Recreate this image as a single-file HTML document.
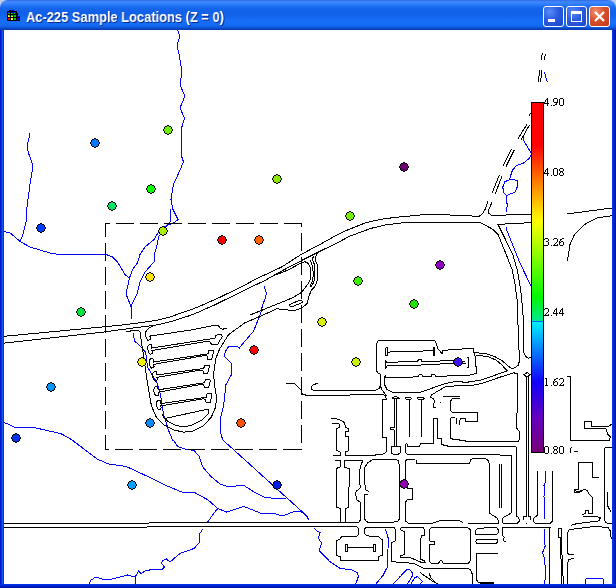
<!DOCTYPE html>
<html><head><meta charset="utf-8"><title>Ac-225 Sample Locations</title>
<style>
html,body{margin:0;padding:0;background:#fff;overflow:hidden}
body{width:616px;height:588px;position:relative;font-family:"Liberation Sans",sans-serif}
#win{position:absolute;left:0;top:0;width:616px;height:588px;background:#0030e0;overflow:hidden}
#tb{position:absolute;left:0;top:0;width:616px;height:30px;border-radius:8px 8px 0 0;
background:linear-gradient(to bottom,#2a62dc 0.0%,#3c82fa 3.3%,#3a86ff 10.0%,#2878f8 16.7%,#1666ec 26.7%,#1260e8 40.0%,#1262ea 53.3%,#146af4 60.0%,#166ef8 73.3%,#1468f0 86.7%,#0c50d0 93.3%,#0838a8 100.0%)}
#lb{position:absolute;left:0;top:30px;width:4px;height:558px;background:linear-gradient(to right,#0019cf 0,#0019cf 1px,#0030e0 1px,#0030e0 2px,#1a5aee 2px,#1a5aee 3px,#0034e0 3px)}
#rb{position:absolute;right:0;top:30px;width:4px;height:558px;background:linear-gradient(to right,#0034e4 0,#0034e4 1px,#0028d8 1px,#0028d8 2px,#001cc4 2px,#001cc4 3px,#00109c 3px)}
#bb{position:absolute;left:0;bottom:0;width:616px;height:4px;background:linear-gradient(to bottom,#0034e4 0,#0034e4 1px,#0028d8 1px,#0028d8 2px,#001cc4 2px,#001cc4 3px,#00109c 3px)}
#client{position:absolute;left:4px;top:30px;width:608px;height:554px;background:#fff}
#title{position:absolute;left:26px;top:9px;color:#fff;font-weight:bold;font-size:14px;line-height:16px;white-space:nowrap;text-shadow:1px 1px 0 #0a2a8c;transform-origin:0 0;transform:scaleX(0.92);will-change:transform}
.btn{position:absolute;top:6px;width:21px;height:21px;box-sizing:border-box;border:1px solid #fff;border-radius:3px;
background:radial-gradient(circle at 30% 25%,#5a8cf8 0%,#2a5ce0 45%,#1a46c8 100%)}
#bclose{background:radial-gradient(circle at 30% 25%,#f09070 0%,#d8502c 45%,#c03a18 100%)}
.lbl{position:absolute;left:545px;font-size:11px;line-height:11px;color:#000;white-space:nowrap}
</style></head><body>
<div id="win">
<div style="position:absolute;left:0;top:0;width:616px;height:8px;background:#bccaec"></div>
<div id="tb"></div>
<div id="lb"></div><div id="rb"></div><div id="bb"></div>
<div id="client"></div>
<svg width="616" height="588" viewBox="0 0 616 588" style="position:absolute;left:0;top:0" shape-rendering="crispEdges">
<defs><clipPath id="c"><rect x="4" y="30" width="608" height="554"/></clipPath>
<linearGradient id="cb1" gradientUnits="userSpaceOnUse" x1="0" y1="103" x2="0" y2="322"><stop offset="0.0000" stop-color="#ff0000"/><stop offset="0.1918" stop-color="#ff0000"/><stop offset="0.5388" stop-color="#ffff00"/><stop offset="0.8858" stop-color="#00f800"/><stop offset="1.0000" stop-color="#00e696"/></linearGradient>
<linearGradient id="cb2" gradientUnits="userSpaceOnUse" x1="0" y1="322" x2="0" y2="452"><stop offset="0.0000" stop-color="#00f0ff"/><stop offset="0.4615" stop-color="#1000f8"/><stop offset="0.7308" stop-color="#6400c0"/><stop offset="1.0000" stop-color="#780078"/></linearGradient>
</defs>
<g clip-path="url(#c)" fill="none" stroke-width="1">
<path stroke="#0000ff" d="M30 133 L27 147 L28.5 153 L33 166 L30 184.5 L27 207 L26 222 L22.5 236 L20 241M4 231.5 L10 233 L14 236 L20 241.5 L30 247 L50 253 L62.5 255 L80 254 L105 254 L112.5 257 L117.5 262 L125 274.5 L129.5 278M177.5 30 L180 36 L177 45 L179 54 L182 72 L180 85 L185 96 L180 108 L184.5 118 L181 130 L181 147 L181 154.5 L183.5 162 L178 174.5 L173.5 184.5 L171 199.5 L173 209.5 L178 219.5 L175 222 L164 227 L158 233 L154 239.5 L145 247 L140 254.5 L137.5 263 L132.5 269.5 L129.5 278 L127.5 287 L126 294 L131 306.5 L131 319M171 209.5 L170 222 L164 229.5 L159 236 L156.5 247 L154 256 L154 262 L145 272 L140 282 L137 294 L131 306.5M133.3 333.5 L133.6 336 L134.6 341 L139.5 345.5 L142 348 L145.3 352 L146.5 357 L147.3 366.8 L152.7 375.7 L157 382.9 L160.5 395 L163.5 414 L168.4 430 L172.5 440 L174 441M4 422.8 L8 424 L14.4 427.2 L32.6 427.2 L47 430.5 L61 433.7 L70 438.5 L82 447.5 L97.5 459.2 L108 463.8 L126 466.4 L144 474.7 L164 484.6 L181.5 492 L195 492.75 L207.75 499.75 L217.75 508.5 L226.5 512 L244 506.5 L261.5 513.5 L274 513.5 L282.75 516 L294 511.5 L299 511M224 441 L308 517M174 441 L177.75 446.5 L185 449 L194 450.5 L199 456 L202.75 467 L211.5 477 L220 484 L227.75 486.5 L244 485.5 L254 492 L264 497 L274 498.5 L286.5 498M217.75 508.5 L212.75 514.75 L207.75 522M202.75 529 L199 534.75 L199.75 542 L194 548.5 L180 553.5 L170 562 L166.5 559 L162.75 560.5 L161.5 563.5 L164.5 567 L161.5 570 L154 569 L145 571 L141 573.5 L138.75 571 L135 577 L127.5 575 L112.5 579 L105 580 L96 577 L91 580 L89 584M135 577 L135 584M544.5 72.5 L547.5 82.5M523.3 135.8 L523.6 140.5 L527.4 147 L531.5 153.6 L529.3 158.3 L523.6 163 L516.2 165.7 L512.4 170.4 L510.2 177 L509.6 179.8 L505 181.6 L502.7 187.2 L504 192.9 L506.4 195.7 L515.2 191.9 L517.1 187.2 L517.1 180.7 L513.4 179.4 L509.6 179.8M506.4 195.7 L507.2 206 L505.9 212.5M506 227 L507 230.7 L519.5 262 L531 286M264 286 L264.5 288 L266.5 293.2 L265 299 L262.6 305 L260.7 313.2 L253.6 331 L242.9 343.6 L239.3 348 L236.6 346.2 L228.6 346.8 L225.9 350.7 L224 356 L231.8 364 L231.8 374 L226 384.6 L223.6 405.7 L220.7 417 L220.7 433.3 L222.8 440 L224 441M299 511 L305 514.2 L309.2 520M314.2 528.3 L316.7 530.8 L320 532.5 L318.3 538.3 L321.7 543.3 L319.2 550.8 L330 561.7 L340 568.3 L351.7 570 L357.5 572.5 L358.3 576.7 L355.8 584M385.3 529.2 L388.3 538.3 L387.5 566.7 L383.3 575 L375.8 584M400 576.7 L393.3 584M393.3 584 L406.7 569.7 L410 569.7 L411.7 571.7 L413 575 L407.5 584M410.8 584 L415 577.5 L417.5 576.7 L422.5 581.7 L420 584M545.3 471 L545.3 482 L544 485.5 L544.8 488 L544 496.5 L544.5 518.7M545.1 528.6 L544 534.2 L545.1 546.3 L542.5 552.9 L544.7 558.4 L545.6 576.1 L544.5 584M585.5 584 L585.5 579.5 L587 578.5 L602 578.5 L603.5 579.5 L603.5 584"/>
<path stroke="#000" d="M4 523.5 L149 523.5M149 522.5 L346 522.5M4 527.5 L147 527.5M147 526.5 L300 526.5M4 336.3 L121 325.2 L149 321.5 L156 320.5 L159 319.8 L172 316.5 L179.5 313.4 L189.2 310.4 L199 306.6 L208.7 302.2 L219 297.7 L239.2 287.9 L258.7 277.7 L265 274.8 L282 266.8 L301.4 254.3 L319.5 244.7 L335 236.1 L347 230.2 L365.5 222.8 L380 219.5 L395.5 217.3 L420.5 215 L438 214.5 L462 215.5 L479.3 216.4 L482.9 212.9 L485 209.5 L488 201.5M492 202.5 L488 211 L489 213.5 L491.8 215.5 L518.6 214.6 L531 214.3M4 343.1 L105 331.9 L122 329.5 L137 327.5 L153 325.5 L158 324.6 L172 321.4 L179.5 318.7 L189.2 315.8 L199 311.9 L208.7 307.5 L215.8 304.4 L229.5 297.6 L249 287.9 L265 280.5 L282 270.8 L301.4 260.6 L318.4 252 L335 244 L350 236.1 L370.5 228.5 L385 225 L403 222.8 L420 222.6 L480.3 222.6 L492.7 229.2 L498 234.3 L506 254 L512.3 270 L515 284.3 L517.1 300M531 222.7 L511.4 223.6 L498 224.5 L503.4 235.2 L513.2 255.7 L517.7 271.8 L520.4 287.9 L521.8 300M126 331.5 L130 331.5 L130.5 330.5 L138.5 330.5 L140 332 L140.5 334 L140.8 338 L143.4 354.5 L148 386.4 L151.4 405.7 L156.2 417 L164.4 425.2 L174 430 L183.8 432.2 L193.6 430.9 L203.3 426 L211.4 417 L215.5 407.3 L216.6 397.6 L214.7 386.2 L213.6 375 L214.3 368.6 L216 358 L219.6 349 L228.6 334.6 L244.6 323 L259 316.8 L276.8 308.8 L285.7 309.6 L292.9 311 L294.3 310.7 L302.6 307.5 L307.4 303.3 L308.6 297.4 L311 290.8 L315.7 285.5 L317.5 279 L317.3 264.5 L315 260 L315 257.2 L318.4 252M250 315 L283.6 301.5 L292 298 L300.2 293.2 L303.8 289.6 L308.5 283 L310.8 279 L311 274.8 L310.5 268 L308.2 263.4 L304.8 261.7 L301.4 262.8 L287.7 270.2 L275.8 274.8M313.5 256.5 L312.2 258.9 L314.4 264.5 L315 274.8 L313.9 282 L311 287 L310 286 L312.2 282 L313.3 274.8 L312.7 266.8 L309.9 259.4M289.5 304.5 L300.2 300 L302 301 L302 302.7 L291.3 307 L289.5 305.7 L289.5 304.5M209 409 L208 413.8 L201.7 420.3 L192 425.2 L183.8 426.8 L175 425.2 L167.6 421 L163.5 417 L162.4 414.6 L165.2 418.4 L205 409.8 L209 409M153.8 325.3 L152.75 325.8 L148.5 328.4 L146 331.4 L145.5 334.75 L146.4 338.6 L148 340.3 L150.2 339.4 L150.6 337.7 L149.8 336 L190 330.2 L210.5 326.1 L218.2 325.2 L219.9 328 L222.4 329.2 L226.7 328.4M285.7 383.7 L294.6 383.7 L298.2 387.3 L301.5 390M542.5 53 L541 60M545.5 54.5 L544 60M540 70 L538 82.5M542 70 L540.5 82M530.2 113.4 L529.6 116.2M527.4 123.7 L518 138.6M529.6 124.6 L520.8 140.5M511.5 148.9 L503 165.7M514.3 149.9 L505.9 166.7M499.3 175 L492.2 192.9M502.1 176 L495.2 193.8M567 214 L612 208M612 215.7 L597 218 L584.5 224.5 L574.5 234.5 L570 244.5 L567.5 260.7M214.8 338.2 L151.9 348 L151.5 345 L149.8 344.5 L148 346.2 L147.7 349.2 L148.5 352.2 L150.2 354.3 L151.9 353.9 L152.75 352.2 L151.9 350.5 L208 341.1 L209.7 341.6 L211.8 344.5 L217.7 344.5 L219 342 L222.4 336.5 L221.6 334.75 L217.3 334.75 L216 335.6 L214.8 338.2M208 353.9 L153.6 362 L152.9 358.9 L151.2 358.4 L149.4 360.1 L149.1 363.1 L149.9 366.1 L151.6 368.2 L153.3 367.8 L154.15 366.1 L153.3 364.4 L204.5 355.6 L207.1 356 L207.5 359 L211.8 359 L213.5 351.75 L213 350.5 L209.2 350.5 L208.4 350.9 L208 353.9M203.9 368.4 L157 375 L156.3 371.9 L154.6 371.4 L152.8 373.1 L152.5 376.1 L153.3 379.1 L155 381.2 L156.7 380.8 L157.55 379.1 L156.7 377.4 L200.4 370.1 L203 370.5 L203.4 373.5 L207.7 373.5 L209.4 366.25 L208.9 365 L205.1 365 L204.3 365.4 L203.9 368.4M204.8 382.7 L158.3 389.8 L157.6 386.7 L155.9 386.2 L154.1 387.9 L153.8 390.9 L154.6 393.9 L156.3 396 L158 395.6 L158.85 393.9 L158 392.2 L201.3 384.4 L203.9 384.8 L204.3 387.8 L208.6 387.8 L210.3 380.55 L209.8 379.3 L206 379.3 L205.2 379.7 L204.8 382.7M206.5 397.2 L160.8 403.6 L160.1 400.5 L158.4 400 L156.6 401.7 L156.3 404.7 L157.1 407.7 L158.8 409.8 L160.5 409.4 L161.35 407.7 L160.5 406 L203 398.9 L205.6 399.3 L206 402.3 L210.3 402.3 L212 395.05 L211.5 393.8 L207.7 393.8 L206.9 394.2 L206.5 397.2M301.5 391 L302.5 394.3 L307.6 395.5 L349 395.5 L351 394.5 L382.5 394.5 L385.3 395.5 L386.5 399.5 L382.5 399.5 L382.5 437 L383 437 L386.7 437.9 L386.7 450.6 L385 453.2 L380 454.9 L346.8 455.7 L345 455.7 L345 452.3 L348.5 450.6 L348.5 436.2 L345 436.2 L345 431.9 L348.5 431.9 L348.5 428.5 L345.9 427.7 L344.2 422.6 L343.4 421.8 L339.1 419.3 L331.5 418.4M332.3 423.2 L338.3 423.2 L340 425.2 L339.5 427.7 L336.6 428.5 L336.6 450.6 L340.8 452.3 L340.8 455.4 L333.2 455.4M317.9 383.2 L312.7 385 L311 387 L312 389.5 L314.5 390.4 L374.8 390.4 L379 388.7 L380.3 385.3 L380.3 374.2 L377.4 372.5 L376.5 370 L376.5 343.6 L378.5 340.5 L434.6 340.5 L436.3 343.6 L438 348.7 L441.4 353 L442.5 353.8 L442.5 350.4 L473.5 348.2 L473.5 352 L475.2 356.5 L475.8 362.7 L476.4 373.5 L470 375 L435.5 376.5 L434.6 374.2 L432 374.2 L431.2 376.8 L422.5 376.8 L421.9 374.6 L419.3 374.6 L418.5 376.8 L387 378 L385 376.8 L385 374.6M380.3 385.3 L381.5 389 L385 393.8 L386.7 396.3M384.5 375.9 L384.5 384.4 L387 389.5 L392.1 392.1 L421 392.1 L444.8 383.6 L458.4 381 L465 382.6 L482 379.8 L493.4 375.8 L505.9 371.2 L507.6 370.7 L504.8 368.4 L501.4 364.4 L495.7 359.9 L487.7 356.5 L477 355.3 L475.2 356.5M474 352.5 L485.5 353.6 L494.5 356.5 L502.5 361 L508.2 366.1 L511.6 368.4 L515 367.8 L518.4 365 L519.5 360.5 L519 350.2 L518.2 330 L517.1 300M385.6 347.9 L387 347.9 L387 355.5 L385.6 355.5 L385.6 347.9M387 352.1 L433 350.7M433 347 L434.5 347 L434.5 355.5 L433 355.5 L433 347M387 362.3 L385.3 360.6 L385.3 368.8 L387 365.7M387 362.3 L417.6 361.5 L418.5 359.2 L421 359.2 L421.5 361.5 L455 360.6 L465.5 361.5M387 365.7 L417.6 365.2 L455 363.2 L465.5 363.2M466.5 357.5 L468.5 357.5 L468.5 367 L466.5 367M430.4 397.2 L432 394.6 L444.8 387 L458.4 385.6 L465 385.5 L476.4 384.9 L487.7 381.5 L499 377.5 L510.5 373.9 L514.4 372.6 L515 373.5 L517.5 373.5 L517.5 401.4 L516.4 427.7 L519.8 431.9 L519.8 438.7 L518 441.5 L466 441.5 L465.5 440.5 L460 440.5 L459.5 439.5 L453 439.5 L452 438.5 L450.5 438.5 L450.5 417.6M430.4 397.2 L433.8 398.9 L434.6 402.3 L433.3 403.5 L433.8 407.4 L436 407.4M440.3 402.3 L441 402.3M521.8 300 L523.3 319 L523.7 347 L523.9 352.5 L525.8 356.5 L528 358.2 L531.5 357.6M531 374.5 L529.5 374.5 L527.5 372.5 L524 374.5 L525.8 376.4 L528.6 376.4 L529.5 374.5M526.5 376.4 L526.5 516.5M528.5 376.4 L528.5 516.5M443.1 396.8 L459.6 396.8M459.6 398.9 L451.9 398.9 L450.5 401.4 L450.5 410.8 L452.7 412.5 L477.4 412.5 L477.4 421.8 L465.5 421.8 L465.5 418.4 L461.3 418.1 L459.6 421 L459.6 425.2M454.5 417.6 L450.5 417.6M456.2 417.6 L456.2 424.3M392.1 398.9 L393 397.2 L395.5 396.6 L398 397.2 L399.2 398.9 L392.1 398.9M394.3 399 L394.3 427.5 L390.5 427.5 L390.5 429.5 L394.3 429.5M396.9 399 L396.9 446.4M394.3 429.5 L394.3 446.4M404.9 398.4 L406 397.6 L410.5 397.6 L411.7 398.4 L410.5 399.2 L406 399.2 L404.9 398.4M409.5 399.2 L409.5 437M416.8 398.4 L418 397.6 L423.2 397.6 L424.4 398.4 L423.2 399.2 L418 399.2 L416.8 398.4M421.4 399.2 L421.4 437M433.5 430.2 L433.5 418.5 L437.5 418.5 L437.5 438.5 L441.5 438.5 L441.5 444.5 L443.5 444.5 L444 445.5 L447.5 445.5 L448 446.5 L515.5 446.5 L516.9 448 L516.9 516M400 446.4 L391.8 446.4 L391.8 453.2 L393.5 454.5 L397.8 454.5 L400 453.2 L400 446.4M406.8 443 L405.1 445.5 L405.1 452.3 L407.7 454.5 L499.4 454.5 L500.2 455.4 L511.8 455.4 L511.8 512.7 L503.2 517.6 L502.1 520.9 L503.2 523.1 L517.5 523.1 L519.7 520.9 L518.6 517.6 L516.4 516M406.8 443 L407.7 446.4 L419.6 446.4 L420.4 443.5 L433.5 443.5 L433.5 430.2M499.4 464.2 L499.4 508.4M501.6 464.2 L501.6 508.4M405.1 522 L405.8 501.7 L407.5 499.7 L412.2 499.1 L412.2 488 L407.7 488 L405.4 483.8 L405.4 460.8 L407.1 459.5 L414.5 459.5M416.5 459.5 L416.5 463.4 L469.7 463.4 L470.6 460 L472.3 458.8 L485.9 458.8 L488.4 460.8 L489.3 464.2 L489.3 513.2 L496.6 517.6 L498.1 519.8 L498.1 523.1 L463.3 523 L460 520.8 L440 520.8 L433.3 523 L408.3 523 L405.8 520.8M334.9 460.5 L340 460.5 L340.8 462.5 L340.8 466.8 L336.2 468.5 L336.2 507.5 L340.5 508.3 L340.5 522M362.9 460.5 L345 460.5 L344.2 463.4 L345 467.6 L349.3 468.5 L349.3 486.3 L348.5 488 L348.5 507.5 L345.5 508.3 L345.5 522.5 L358.5 522.5 L360.7 519.7 L360.5 502.5 L357 500 L355.8 494.8 L356.1 490.6 L358.7 489.7 L360.4 487.2 L359.5 481.2 L359.5 471 L361.2 464.2 L362.9 460.5M396.1 459.5 L373.1 459.5 L368 462.5 L364.6 467.6 L364.3 477.8 L365.5 489.7 L368 491 L368.9 491.8M368.3 494.2 L364.2 495 L364.2 518.3 L365.8 520.8 L367.5 522 L394.2 522 L398.3 520.8 L399.7 518.3 L399.1 464.2 L398.3 460.8 L396.1 459.5M300 526.5 L356.7 526.5 L358.3 528.3 L358.3 534.7 L356.8 536.5 L341.5 536.5 L340 539.2 L336.7 540.8 L336.7 555.8 L340.8 556.7 L340.8 560 L378.3 560 L378.3 556.7 L382.5 555 L382.5 540 L378.3 536.7 L366.7 535.8 L364.2 533.3 L364.2 529.2 L365.8 527.5 L394.2 527.5 L395.5 530 L395.5 540.8 L391.5 542.5 L391.5 561.7 L413.3 563.3 L423.3 568.3 L467.5 568.3 L470.8 570 L472.5 575 L472.5 584M345.8 544.2 L347.5 544.2 L347.5 551.3 L345.8 551.3 L345.8 544.2M347.5 547.5 L373.3 547.5M373.3 544.2 L375.5 544.2 L375.5 551.3 L373.3 551.3 L373.3 544.2M400.8 527.5 L423.3 527.5 L424.7 530 L424.7 535 L421.7 535.8 L420.8 539.2 L420.8 559.2 L424.2 560.8 L425 562.5 L421.7 562.5 L410 557.5 L400.8 557.5 L400.3 555.8 L404.2 554.7 L404.2 531.7 L400.8 530 L400.8 527.5M431.7 527.5 L466.7 527.5 L470 529.2 L470.8 531.7 L470.8 560 L468.3 563.3 L443.3 563.3 L441.7 560.8 L440 560.8 L438.3 563.7 L431.7 563.7 L429.2 560.8 L429.2 545 L434.2 544.2 L434.2 541.7 L429.2 540.8 L429.2 530 L431.7 527.5M496.6 527.5 L477.5 528.3 L475 531.7 L475.8 534.2 L496.6 534.8 L498.1 533 L498.1 529.7 L496.6 527.5M497.7 539.2 L476.7 539.2 L475.8 541.7 L476.7 543.3 L496.6 543.3 L497.7 541 L497.7 539.2M497.7 553.4 L476.7 553.3 L476.7 580 L478.3 582.5 L493.7 582.7M480 583.5 L493.7 583.5M503.2 527.5 L502.1 529.7 L502.1 535.3 L504.3 537.5 L503.2 539.7 L504.3 541.9 L506 541.9M502.1 527.5 L550.6 527.5M549.5 527.5 L549.5 584M420 572.5 L433.3 581.7 L437.5 584M429.2 573.3 L430.8 577.5 L436.7 584M537.3 471 L537.3 515.4 L534.1 517.6 L533 520.9 L535.2 523.1 L550.6 523.1 L552.8 520.9 L552.4 471M526.5 516.5 L523.5 516.5 L523.5 520M528.5 516.5 L530.5 516.5 L530.5 520M526 523.5 L527 523.5M558.4 528.6 L561.2 528.6 L561.2 537.5 L558.4 537.5 L558.4 528.6M560.6 537.5 L561.5 584M561.2 537.5 L563.4 584M567.9 584 L567.9 562.8 L568.3 559.5 L573.8 558.4M573.8 554.5 L568.3 554 L567.2 551.8 L567.2 533 L569.4 529.7 L577.1 528.6 L594.8 526.4 L608 527.5 L610.2 530.8 L611.3 538.6M570.5 525.3 L577.1 523.6 L599.2 520.9 L600.3 517.6 L594.8 516 L582.6 516M574.9 490 L577.1 492.2 L582.6 490M582.6 514.7 L585.5 513.2 L585.5 510.3 L588.2 510.3 L588.2 513.2 L592.6 513.2 L592.6 497.7 L589.3 494.4 L587 490.6 L584.4 489.3 L579.3 492.7 L574.6 492.7 L574.6 489.3 L578.5 489.3 L578.5 462.6 L592.6 462.6 L592.6 477.4 L598.9 477.4M607.4 492 L607.4 505.5 L611 512M612 447.5 L605.7 447.5 L604.6 448.5 L604.6 520.5 L606.5 523 L612 523.1M566.5 376 L570.5 376 L570.5 440.5 L609 440.5 L610 438.3 L610 436.6 L608.2 434.9 L606.5 430.6 L605.7 428 L584.4 428 L584.4 421.8 L591.6 421.8 L591.6 426.4 L608.2 426.4 L610 425.2 L612 424.3M570 453.2 L570 449 L571.6 447.2M574.2 451.5 L577.6 451.5"/>
<path stroke="#000" d="M105 223.5 H110M116 223.5 H134M140 223.5 H158M164 223.5 H182M188 223.5 H206M212 223.5 H230M236 223.5 H254M260 223.5 H278M284 223.5 H302M105 449.5 H109M115 449.5 H133M139 449.5 H157M163 449.5 H181M187 449.5 H205M211 449.5 H229M235 449.5 H253M259 449.5 H277M283 449.5 H302M105.5 223 V237M105.5 243 V261M105.5 267 V285M105.5 291 V309M105.5 315 V333M105.5 339 V357M105.5 363 V381M105.5 387 V405M105.5 411 V429M105.5 435 V450M301.5 223 V227M301.5 233 V251M301.5 257 V275M301.5 281 V299M301.5 305 V323M301.5 329 V347M301.5 353 V371M301.5 377 V395M301.5 401 V419M301.5 425 V443M301.5 449 V450"/>
<defs><path id="po" d="M4 0h2v1h-2zM2 1h6v1h-6zM1 2h8v1h-8zM1 3h8v1h-8zM0 4h10v1h-10zM0 5h10v1h-10zM1 6h8v1h-8zM1 7h8v1h-8zM2 8h6v1h-6zM4 9h2v1h-2z"/><path id="pi" d="M4 1h2v1h-2zM2 2h6v1h-6zM2 3h6v1h-6zM1 4h8v1h-8zM1 5h8v1h-8zM2 6h6v1h-6zM2 7h6v1h-6zM4 8h2v1h-2z"/></defs>
<use href="#po" x="90" y="138" fill="#000" stroke="none"/><use href="#pi" x="90" y="138" fill="#0078ff" stroke="none"/>
<use href="#po" x="163" y="125" fill="#000" stroke="none"/><use href="#pi" x="163" y="125" fill="#6cf000" stroke="none"/>
<use href="#po" x="36" y="223" fill="#000" stroke="none"/><use href="#pi" x="36" y="223" fill="#003cff" stroke="none"/>
<use href="#po" x="107" y="201" fill="#000" stroke="none"/><use href="#pi" x="107" y="201" fill="#00e664" stroke="none"/>
<use href="#po" x="146" y="184" fill="#000" stroke="none"/><use href="#pi" x="146" y="184" fill="#00ff00" stroke="none"/>
<use href="#po" x="145" y="272" fill="#000" stroke="none"/><use href="#pi" x="145" y="272" fill="#ffe600" stroke="none"/>
<use href="#po" x="158" y="226" fill="#000" stroke="none"/><use href="#pi" x="158" y="226" fill="#aaf000" stroke="none"/>
<use href="#po" x="217" y="235" fill="#000" stroke="none"/><use href="#pi" x="217" y="235" fill="#ff0000" stroke="none"/>
<use href="#po" x="254" y="235" fill="#000" stroke="none"/><use href="#pi" x="254" y="235" fill="#ff6400" stroke="none"/>
<use href="#po" x="272" y="174" fill="#000" stroke="none"/><use href="#pi" x="272" y="174" fill="#8ce600" stroke="none"/>
<use href="#po" x="399" y="162" fill="#000" stroke="none"/><use href="#pi" x="399" y="162" fill="#6e006e" stroke="none"/>
<use href="#po" x="345" y="211" fill="#000" stroke="none"/><use href="#pi" x="345" y="211" fill="#78f000" stroke="none"/>
<use href="#po" x="435" y="260" fill="#000" stroke="none"/><use href="#pi" x="435" y="260" fill="#9200c0" stroke="none"/>
<use href="#po" x="353" y="276" fill="#000" stroke="none"/><use href="#pi" x="353" y="276" fill="#3cf000" stroke="none"/>
<use href="#po" x="76" y="307" fill="#000" stroke="none"/><use href="#pi" x="76" y="307" fill="#00e63c" stroke="none"/>
<use href="#po" x="46" y="382" fill="#000" stroke="none"/><use href="#pi" x="46" y="382" fill="#0096ff" stroke="none"/>
<use href="#po" x="11" y="433" fill="#000" stroke="none"/><use href="#pi" x="11" y="433" fill="#0032f0" stroke="none"/>
<use href="#po" x="137" y="357" fill="#000" stroke="none"/><use href="#pi" x="137" y="357" fill="#f0f500" stroke="none"/>
<use href="#po" x="145" y="418" fill="#000" stroke="none"/><use href="#pi" x="145" y="418" fill="#008cff" stroke="none"/>
<use href="#po" x="127" y="480" fill="#000" stroke="none"/><use href="#pi" x="127" y="480" fill="#00a0ff" stroke="none"/>
<use href="#po" x="272" y="480" fill="#000" stroke="none"/><use href="#pi" x="272" y="480" fill="#001ee6" stroke="none"/>
<use href="#po" x="317" y="317" fill="#000" stroke="none"/><use href="#pi" x="317" y="317" fill="#dcf000" stroke="none"/>
<use href="#po" x="409" y="299" fill="#000" stroke="none"/><use href="#pi" x="409" y="299" fill="#1ee600" stroke="none"/>
<use href="#po" x="351" y="357" fill="#000" stroke="none"/><use href="#pi" x="351" y="357" fill="#c8f000" stroke="none"/>
<use href="#po" x="453" y="357" fill="#000" stroke="none"/><use href="#pi" x="453" y="357" fill="#4010ff" stroke="none"/>
<use href="#po" x="249" y="345" fill="#000" stroke="none"/><use href="#pi" x="249" y="345" fill="#ff0000" stroke="none"/>
<use href="#po" x="236" y="418" fill="#000" stroke="none"/><use href="#pi" x="236" y="418" fill="#ff5000" stroke="none"/>
<use href="#po" x="399" y="479" fill="#000" stroke="none"/><use href="#pi" x="399" y="479" fill="#8c00aa" stroke="none"/>
</g>
<rect x="531" y="102" width="13" height="351" fill="#000"/>
<rect x="532" y="103" width="11" height="219" fill="url(#cb1)"/>
<rect x="532" y="322" width="11" height="130" fill="url(#cb2)"/>
<rect x="532" y="321" width="11" height="1" fill="#0064ff"/>
<path fill="#000" stroke="none" d="M547 98h1v1h-1zM546 99h2v1h-2zM545 100h1v1h-1zM547 100h1v1h-1zM545 101h1v1h-1zM547 101h1v1h-1zM544 102h1v1h-1zM547 102h1v1h-1zM544 103h5v1h-5zM547 104h1v1h-1zM547 105h1v1h-1zM551 105h1v1h-1zM554 98h3v1h-3zM553 99h1v1h-1zM557 99h1v1h-1zM553 100h1v1h-1zM557 100h1v1h-1zM553 101h1v1h-1zM557 101h1v1h-1zM554 102h4v1h-4zM556 103h1v1h-1zM555 104h2v1h-2zM553 105h2v1h-2zM560 98h3v1h-3zM559 99h1v1h-1zM563 99h1v1h-1zM559 100h1v1h-1zM563 100h1v1h-1zM559 101h1v1h-1zM563 101h1v1h-1zM559 102h1v1h-1zM563 102h1v1h-1zM559 103h1v1h-1zM563 103h1v1h-1zM559 104h1v1h-1zM563 104h1v1h-1zM560 105h3v1h-3zM547 168h1v1h-1zM546 169h2v1h-2zM545 170h1v1h-1zM547 170h1v1h-1zM545 171h1v1h-1zM547 171h1v1h-1zM544 172h1v1h-1zM547 172h1v1h-1zM544 173h5v1h-5zM547 174h1v1h-1zM547 175h1v1h-1zM551 175h1v1h-1zM554 168h3v1h-3zM553 169h1v1h-1zM557 169h1v1h-1zM553 170h1v1h-1zM557 170h1v1h-1zM553 171h1v1h-1zM557 171h1v1h-1zM553 172h1v1h-1zM557 172h1v1h-1zM553 173h1v1h-1zM557 173h1v1h-1zM553 174h1v1h-1zM557 174h1v1h-1zM554 175h3v1h-3zM560 168h3v1h-3zM559 169h1v1h-1zM563 169h1v1h-1zM559 170h1v1h-1zM563 170h1v1h-1zM560 171h3v1h-3zM560 172h1v1h-1zM562 172h1v1h-1zM559 173h1v1h-1zM563 173h1v1h-1zM559 174h1v1h-1zM563 174h1v1h-1zM560 175h3v1h-3zM545 238h3v1h-3zM544 239h1v1h-1zM548 239h1v1h-1zM548 240h1v1h-1zM546 241h2v1h-2zM548 242h1v1h-1zM548 243h1v1h-1zM548 244h1v1h-1zM544 245h4v1h-4zM551 245h1v1h-1zM554 238h3v1h-3zM553 239h1v1h-1zM557 239h1v1h-1zM557 240h1v1h-1zM557 241h1v1h-1zM556 242h1v1h-1zM555 243h1v1h-1zM554 244h1v1h-1zM557 244h1v1h-1zM553 245h5v1h-5zM562 238h2v1h-2zM560 239h2v1h-2zM560 240h1v1h-1zM559 241h1v1h-1zM561 241h2v1h-2zM559 242h2v1h-2zM563 242h1v1h-1zM559 243h1v1h-1zM563 243h1v1h-1zM559 244h1v1h-1zM563 244h1v1h-1zM560 245h3v1h-3zM545 308h3v1h-3zM544 309h1v1h-1zM548 309h1v1h-1zM548 310h1v1h-1zM548 311h1v1h-1zM547 312h1v1h-1zM546 313h1v1h-1zM545 314h1v1h-1zM548 314h1v1h-1zM544 315h5v1h-5zM551 315h1v1h-1zM556 308h1v1h-1zM555 309h2v1h-2zM554 310h1v1h-1zM556 310h1v1h-1zM554 311h1v1h-1zM556 311h1v1h-1zM553 312h1v1h-1zM556 312h1v1h-1zM553 313h5v1h-5zM556 314h1v1h-1zM556 315h1v1h-1zM562 308h1v1h-1zM561 309h2v1h-2zM560 310h1v1h-1zM562 310h1v1h-1zM560 311h1v1h-1zM562 311h1v1h-1zM559 312h1v1h-1zM562 312h1v1h-1zM559 313h5v1h-5zM562 314h1v1h-1zM562 315h1v1h-1zM545 378h2v1h-2zM546 379h1v1h-1zM546 380h1v1h-1zM546 381h1v1h-1zM546 382h1v1h-1zM546 383h1v1h-1zM546 384h1v1h-1zM545 385h3v1h-3zM551 385h1v1h-1zM556 378h2v1h-2zM554 379h2v1h-2zM554 380h1v1h-1zM553 381h1v1h-1zM555 381h2v1h-2zM553 382h2v1h-2zM557 382h1v1h-1zM553 383h1v1h-1zM557 383h1v1h-1zM553 384h1v1h-1zM557 384h1v1h-1zM554 385h3v1h-3zM560 378h3v1h-3zM559 379h1v1h-1zM563 379h1v1h-1zM563 380h1v1h-1zM563 381h1v1h-1zM562 382h1v1h-1zM561 383h1v1h-1zM560 384h1v1h-1zM563 384h1v1h-1zM559 385h5v1h-5zM545 446h3v1h-3zM544 447h1v1h-1zM548 447h1v1h-1zM544 448h1v1h-1zM548 448h1v1h-1zM544 449h1v1h-1zM548 449h1v1h-1zM544 450h1v1h-1zM548 450h1v1h-1zM544 451h1v1h-1zM548 451h1v1h-1zM544 452h1v1h-1zM548 452h1v1h-1zM545 453h3v1h-3zM551 453h1v1h-1zM554 446h3v1h-3zM553 447h1v1h-1zM557 447h1v1h-1zM553 448h1v1h-1zM557 448h1v1h-1zM554 449h3v1h-3zM554 450h1v1h-1zM556 450h1v1h-1zM553 451h1v1h-1zM557 451h1v1h-1zM553 452h1v1h-1zM557 452h1v1h-1zM554 453h3v1h-3zM560 446h3v1h-3zM559 447h1v1h-1zM563 447h1v1h-1zM559 448h1v1h-1zM563 448h1v1h-1zM559 449h1v1h-1zM563 449h1v1h-1zM559 450h1v1h-1zM563 450h1v1h-1zM559 451h1v1h-1zM563 451h1v1h-1zM559 452h1v1h-1zM563 452h1v1h-1zM560 453h3v1h-3z"/>
</svg>
<div id="title">Ac-225 Sample Locations (Z = 0)</div>
<div class="btn" style="left:543px"><div style="position:absolute;left:4px;top:12px;width:7px;height:3px;background:#fff"></div></div>
<div class="btn" style="left:566px"><div style="position:absolute;left:4px;top:4px;width:11px;height:11px;box-sizing:border-box;border:1px solid #fff;border-top-width:3px"></div></div>
<div class="btn" id="bclose" style="left:589px"><svg width="19" height="19" style="position:absolute;left:0;top:0"><path d="M5 5 L14 14 M14 5 L5 14" stroke="#fff" stroke-width="2.2" fill="none"/></svg></div>
<svg width="14" height="12" style="position:absolute;left:7px;top:10px" shape-rendering="crispEdges">
<path fill="#000" d="M0 1h10v10h-10zM10 3h1v8h-1zM11 6h2v5h-2zM2 0h2v1h-2zM6 0h1v1h-1z"/>
<path fill="#0000ff" d="M4 0h2v1h-2zM1 2h2v1h-2zM4 2h2v1h-2zM7 2h2v1h-2zM8 3h1v1h-1zM10 5h1v2h-1zM11 6h1v1h-1zM10 8h2v2h-2z"/>
<path fill="#00c800" d="M1 3h2v1h-2zM4 3h2v1h-2zM7 3h1v1h-1zM2 5h1v1h-1zM4 5h2v1h-2zM7 5h2v2h-2zM7 8h2v2h-2z"/>
<path fill="#ffff00" d="M1 5h1v1h-1zM1 6h2v1h-2zM4 6h2v1h-2zM4 8h2v2h-2z"/>
<path fill="#ff0000" d="M1 8h2v2h-2z"/>
</svg>
</div>
</body></html>
